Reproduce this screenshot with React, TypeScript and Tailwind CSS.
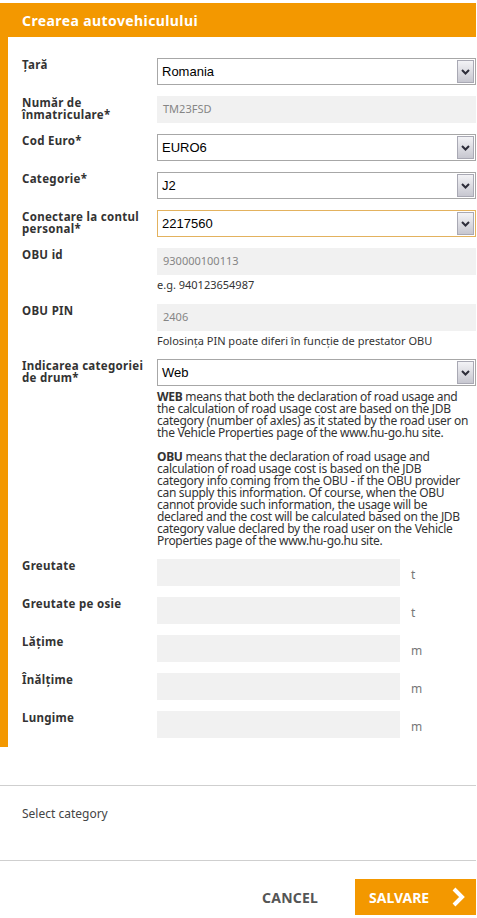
import React from "react";

const font = "font-['Noto_Sans',_'Open_Sans',_sans-serif]";

const webLines = [
  "means that both the declaration of road usage and",
  "the calculation of road usage cost are based on the JDB",
  "category (number of axles) as it stated by the road user on",
  "the Vehicle Properties page of the www.hu-go.hu site.",
];

const obuLines = [
  "means that the declaration of road usage and",
  "calculation of road usage cost is based on the JDB",
  "category info coming from the OBU - if the OBU provider",
  "can supply this information. Of course, when the OBU",
  "cannot provide such information, the usage will be",
  "declared and the cost will be calculated based on the JDB",
  "category value declared by the road user on the Vehicle",
  "Properties page of the www.hu-go.hu site.",
];

function SelectBox({ value, focused }: { value: string; focused?: boolean }) {
  return (
    <div
      className={`flex h-[27px] w-[319px] items-stretch border bg-white ${
        focused ? "border-[#e3b25e]" : "border-[#a7a7a7]"
      }`}
    >
      <div className="flex flex-1 items-center pl-[4px] font-['Liberation_Sans',_Arial,_sans-serif] text-[13px] text-black">
        {value}
      </div>
      <div className="m-[1px] flex w-[17px] items-center justify-center border border-[#a9a9b4] bg-gradient-to-b from-[#f3f3f6] to-[#c7c7d0]">
        <svg width="9" height="6" viewBox="0 0 9 6" fill="none">
          <path d="M1 1l3.5 3.5L8 1" stroke="#2d2d3a" strokeWidth="2" />
        </svg>
      </div>
    </div>
  );
}

function ReadOnly({ value, width = "w-[319px]" }: { value?: string; width?: string }) {
  return (
    <div className={`flex h-[27px] ${width} items-center bg-[#f1f1f1] pl-[6px] text-[11px] text-[#858585]`}>
      {value}
    </div>
  );
}

function Label({ children }: { children: React.ReactNode }) {
  return (
    <div className="w-[135px] shrink-0 pr-[4px] pt-[1px] text-[11.5px] font-bold leading-[12px] tracking-[0.3px] text-[#333]">
      {children}
    </div>
  );
}

function Row({ label, children }: { label: React.ReactNode; children: React.ReactNode }) {
  return (
    <div className="flex">
      <Label>{label}</Label>
      <div className="flex flex-col">{children}</div>
    </div>
  );
}

function MeasureRow({ label, unit }: { label: string; unit: string }) {
  return (
    <div className="flex">
      <Label>{label}</Label>
      <ReadOnly width="w-[243px]" />
      <div className="flex h-[27px] items-center pl-[11px] pt-[4px] text-[12px] text-[#777]">{unit}</div>
    </div>
  );
}

function Paragraph({ head, lines }: { head: string; lines: string[] }) {
  return (
    <div className="flex flex-col">
      {lines.map((line, i) => (
        <div key={i} className="h-[12px] whitespace-nowrap text-[12px] leading-[12px] tracking-[-0.3px]">
          {i === 0 && <b>{head} </b>}
          {line}
        </div>
      ))}
    </div>
  );
}

export default function App() {
  return (
    <div className={`w-[477px] bg-white ${font}`}>
      <div className="pt-[3px]">
        <div className="flex h-[34px] w-[476px] items-center bg-[#f39800] pl-[22px] text-[14px] font-bold tracking-[0.4px] text-white">
          Crearea autovehiculului
        </div>
      </div>

      {/* form body with the orange side bar */}
      <div className="w-[476px] border-l-[8px] border-[#f39800] pb-[9px] pl-[14px] pt-[21px]">
        <div className="flex flex-col gap-[11px]">
          <Row label="Țară">
            <SelectBox value="Romania" />
          </Row>
          <Row label="Număr de înmatriculare*">
            <ReadOnly value="TM23FSD" />
          </Row>
          <Row label="Cod Euro*">
            <SelectBox value="EURO6" />
          </Row>
          <Row label="Categorie*">
            <SelectBox value="J2" />
          </Row>
          <Row label="Conectare la contul personal*">
            <SelectBox value="2217560" focused />
          </Row>
          <Row label="OBU id">
            <ReadOnly value="930000100113" />
            <div className="mt-[2px] text-[11px] leading-[16px] text-[#333]">e.g. 940123654987</div>
          </Row>
          <Row label="OBU PIN">
            <ReadOnly value="2406" />
            <div className="mt-[2px] text-[11px] leading-[15px] text-[#333]">
              Folosința PIN poate diferi în funcție de prestator OBU
            </div>
          </Row>
          <Row label="Indicarea categoriei de drum*">
            <SelectBox value="Web" />
            <div className="flex w-[319px] flex-col gap-[12px] pb-[1px] pt-[5px] text-[#333]">
              <Paragraph head="WEB" lines={webLines} />
              <Paragraph head="OBU" lines={obuLines} />
            </div>
          </Row>
          <MeasureRow label="Greutate" unit="t" />
          <MeasureRow label="Greutate pe osie" unit="t" />
          <MeasureRow label="Lățime" unit="m" />
          <MeasureRow label="Înălțime" unit="m" />
          <MeasureRow label="Lungime" unit="m" />
        </div>
      </div>

      <div className="mt-[38px] w-[476px] border-t border-[#cfcfcf]" />
      <div className="flex h-[74px] w-[476px] items-start pl-[22px] pt-[19px] text-[12px] text-[#444]">
        Select category
      </div>
      <div className="w-[476px] border-t border-[#cfcfcf]" />

      {/* footer actions */}
      <div className="flex w-[476px] items-center justify-end pt-[18px]">
        <button className="mr-[37px] text-[14px] font-bold tracking-[0.2px] text-[#555]">CANCEL</button>
        <button className="flex h-[36px] w-[121px] items-center justify-between bg-[#f39800] pl-[14px] pr-[11px] text-[14px] font-bold text-white">
          SALVARE
          <svg width="14" height="20" viewBox="0 0 14 20" fill="none">
            <path d="M3 2l8 8-8 8" stroke="white" strokeWidth="4" />
          </svg>
        </button>
      </div>
    </div>
  );
}
